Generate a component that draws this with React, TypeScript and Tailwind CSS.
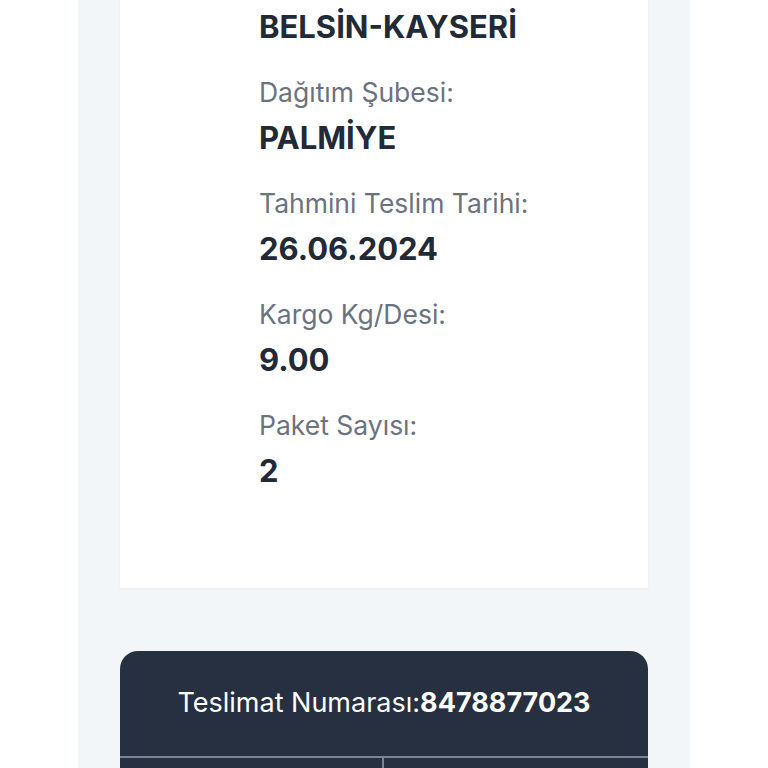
import React from 'react'

const rows = [
  { label: 'Dağıtım Şubesi:', value: 'PALMİYE' },
  { label: 'Tahmini Teslim Tarihi:', value: '26.06.2024' },
  { label: 'Kargo Kg/Desi:', value: '9.00' },
  { label: 'Paket Sayısı:', value: '2' },
]

export default function App() {
  return (
    <div className="h-[768px] overflow-hidden bg-white font-['Inter',sans-serif]">
      <div className="ml-[78px] h-full w-[612px] bg-[#f3f6f9] px-[42px]">
        {/* Bilgi kartı */}
        <div className="bg-white pt-[9px] pb-[99px] pl-[139px] shadow-[0_1px_2px_rgba(0,0,0,0.04)]">
          <p className="text-[31px] leading-[36px] font-bold text-[#222a38]">BELSİN-KAYSERİ</p>
          {rows.map((r) => (
            <div key={r.label} className="mt-[31px]">
              <p className="text-[26.5px] leading-[32px] text-[#6b7280]">{r.label}</p>
              <p className="mt-[12px] text-[31px] leading-[36px] font-bold text-[#222a38]">{r.value}</p>
            </div>
          ))}
        </div>

        {/* Teslimat kartı */}
        <div className="mt-[63px] overflow-hidden rounded-t-[18px] bg-[#273041]">
          <div className="pt-[36px] pb-[37px] text-center text-[27px] leading-[32px] text-white">
            Teslimat Numarası:<span className="font-bold">8478877023</span>
          </div>
          <div className="grid h-[40px] grid-cols-2 border-t-2 border-[#7d8594]">
            <div className="border-r-2 border-[#7d8594]" />
            <div />
          </div>
        </div>
      </div>
    </div>
  )
}
